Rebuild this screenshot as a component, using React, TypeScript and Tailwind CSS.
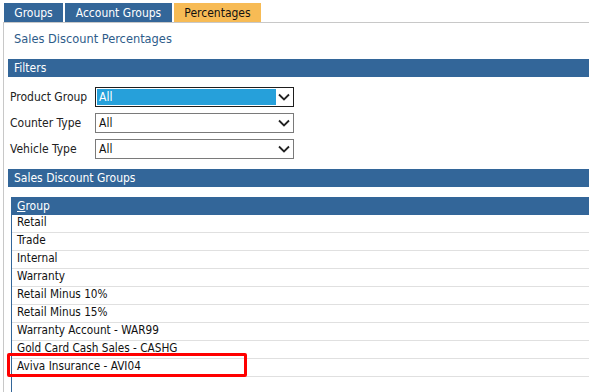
const GROUPS = [
  "Retail",
  "Trade",
  "Internal",
  "Warranty",
  "Retail Minus 10%",
  "Retail Minus 15%",
  "Warranty Account - WAR99",
  "Gold Card Cash Sales - CASHG",
  "Aviva Insurance - AVI04",
]

const FILTERS = ["Product Group", "Counter Type", "Vehicle Type"]

function Chevron() {
  return (
    <svg width="12" height="8" viewBox="0 0 12 8" className="shrink-0">
      <path d="M1 1.5 L6 6.5 L11 1.5" fill="none" stroke="#222" strokeWidth="1.8" />
    </svg>
  )
}

function Select({ active }: { active?: boolean }) {
  return (
    <div
      className={
        "flex h-[20px] w-[199px] items-center border text-[12px] " +
        (active ? "border-[#1e1e1e]" : "border-[#7a7a7a]")
      }
    >
      {active ? (
        <div className="ml-px flex h-[16px] w-[179px] items-center bg-[#26a0da] pl-[2px] text-white">All</div>
      ) : (
        <div className="ml-px w-[179px] pl-[2px] text-[#111]">All</div>
      )}
      <div className="flex flex-1 items-center justify-center pr-px">
        <Chevron />
      </div>
    </div>
  )
}

export default function App() {
  return (
    <div className="relative h-[392px] w-[589px] overflow-hidden bg-white font-['DejaVu_Sans_Condensed',sans-serif] text-[12px] leading-none">
      {/* tabs */}
      <div className="flex gap-[2px] pl-[4px] pt-[3px]">
        <div className="flex h-[19px] w-[59px] items-center justify-center bg-[#336699] text-white">Groups</div>
        <div className="flex h-[19px] w-[107px] items-center justify-center bg-[#336699] text-white">Account Groups</div>
        <div className="flex h-[19px] w-[87px] items-center justify-center bg-[#f7bb55] text-[#111]">Percentages</div>
      </div>

      <div className="ml-[3px] h-full border-l border-t border-[#c8c8c8] pl-[4px]">
        <div className="flex h-[36px] items-center pb-[3px] pl-[6px] text-[12.7px] text-[#2e5c8a]">
          Sales Discount Percentages
        </div>

        <div className="flex h-[18px] items-center bg-[#336699] pl-[6px] text-white">Filters</div>

        <div className="flex flex-col gap-[6px] pt-[10px]">
          {FILTERS.map((f, i) => (
            <div key={f} className="flex h-[20px] items-center">
              <div className="w-[87px] pl-[2px] text-[#222]">{f}</div>
              <Select active={i === 0} />
            </div>
          ))}
        </div>

        <div className="mt-[10px] flex h-[18px] items-center bg-[#336699] pl-[6px] text-white">
          Sales Discount Groups
        </div>

        <div className="ml-[3px] mt-[10px] h-full border-l border-[#336699]">
          <div className="flex h-[18px] items-center bg-[#336699] pl-[5px] text-white">
            <span className="underline">G</span>roup
          </div>
          {GROUPS.map(g => (
            <div key={g} className="flex h-[18px] items-center border-b border-[#e0e0e0] pb-[2px] pl-[5px] text-[11.7px] text-[#111]">
              {g}
            </div>
          ))}
        </div>
      </div>

      {/* highlight box */}
      <div className="absolute left-[7px] top-[353px] h-[24px] w-[240px] rounded-[2px] border-[3px] border-[#ff0000]" />
    </div>
  )
}
